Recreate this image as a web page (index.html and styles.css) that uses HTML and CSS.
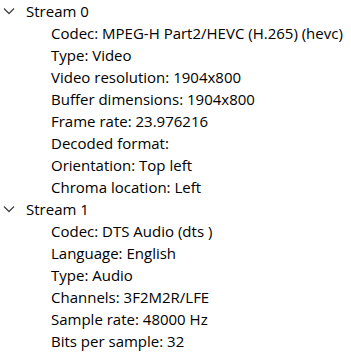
FILE: index.html
```html
<!DOCTYPE html>
<html>
    <head>
        <meta charset="utf-8">
        <title>Streams</title>
        <link rel="stylesheet" href="styles.css">
    </head>
    <body>
        <div class="tree">
            <div class="node">
                <div class="row head">
                    <svg class="chevron" width="12" height="8" viewBox="0 0 12 8"><path d="M1 1.5 L6 6.5 L11 1.5" fill="none" stroke="#444" stroke-width="1.3"/></svg>
                    <span>Stream 0</span>
                </div>
                <div class="row item">Codec: MPEG-H Part2/HEVC (H.265) (hevc)</div>
                <div class="row item">Type: Video</div>
                <div class="row item">Video resolution: 1904x800</div>
                <div class="row item">Buffer dimensions: 1904x800</div>
                <div class="row item">Frame rate: 23.976216</div>
                <div class="row item">Decoded format:</div>
                <div class="row item">Orientation: Top left</div>
                <div class="row item">Chroma location: Left</div>
            </div>
            <div class="node">
                <div class="row head">
                    <svg class="chevron" width="12" height="8" viewBox="0 0 12 8"><path d="M1 1.5 L6 6.5 L11 1.5" fill="none" stroke="#444" stroke-width="1.3"/></svg>
                    <span>Stream 1</span>
                </div>
                <div class="row item">Codec: DTS Audio (dts )</div>
                <div class="row item">Language: English</div>
                <div class="row item">Type: Audio</div>
                <div class="row item">Channels: 3F2M2R/LFE</div>
                <div class="row item">Sample rate: 48000 Hz</div>
                <div class="row item">Bits per sample: 32</div>
            </div>
        </div>
    </body>
</html>
```
FILE: styles.css
```css
body {
    margin: 0px;
    padding: 0px;
    background-color: #fff;
    color: #000;
    font-family: "Open Sans", "Noto Sans", sans-serif;
    font-size: 15px;
}
.tree {
    display: flex;
    flex-direction: column;
}
.row {
    height: 22px;
    display: flex;
    align-items: center;
    white-space: nowrap;
}
.head {
    padding-left: 3px;
}
.chevron {
    margin-right: 11px;
}
.item {
    padding-left: 51px;
}
```
